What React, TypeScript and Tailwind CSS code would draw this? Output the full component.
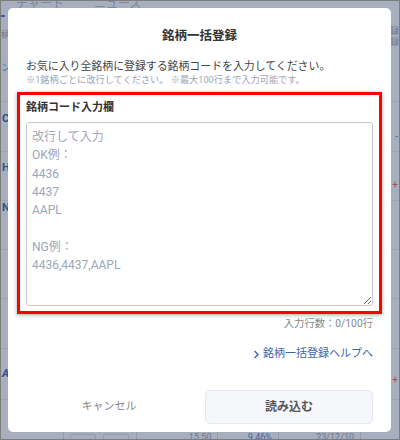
import React from 'react';

const FONT = { fontFamily: 'Roboto, "Noto Sans CJK JP", sans-serif' };

const ROW_LINES = [100, 150, 199, 248, 297, 347, 398];

const PLACEHOLDER = '改行して入力\nOK例：\n4436\n4437\nAAPL\n\nNG例：\n4436,4437,AAPL';

function BackdropPage() {
  return (
    <div className="absolute inset-0 bg-[#a7afbe]">
      {/* tab labels peeking above the dialog */}
      <div className="flex gap-[30px] pl-[15px] -mt-[6px] text-[12px] text-[#7b86a0]">
        <span>チャート</span>
        <span>ニュース</span>
      </div>
      <div className="absolute left-0 top-[14px] w-[4px] h-[2px] bg-[#3f63a8]" />
      <div className="absolute left-0 top-[30px] text-[9px] leading-none text-[#6b7690]">柄</div>
      <div className="absolute left-0 top-[62px] text-[10px] leading-none text-[#5270a8]">ン&gt;</div>
      <div className="absolute left-[1px] top-[112px] text-[11px] font-bold leading-none text-[#2d4f93]">C</div>
      <div className="absolute left-[1px] top-[161px] text-[11px] font-bold leading-none text-[#2d4f93]">H</div>
      <div className="absolute left-[1px] top-[201px] text-[11px] font-bold leading-none text-[#2d4f93]">N</div>
      <div className="absolute left-[1px] top-[367px] text-[11px] font-bold italic leading-none text-[#2d4f93]">A</div>
      <div className="absolute right-0 top-[25px] flex flex-col text-[9px] leading-[11px] text-[#6b7690]">
        <span>録</span>
        <span>録</span>
      </div>
      <div className="absolute right-[1px] top-[131px] text-[10px] leading-none text-[#3f63a8]">-</div>
      <div className="absolute right-[1px] top-[179px] text-[10px] leading-none text-[#b34a5a]">+</div>
      <div className="absolute right-[1px] top-[374px] text-[10px] leading-none text-[#b34a5a]">+</div>
      {ROW_LINES.map((y) => (
        <div key={y} className="absolute inset-x-0 h-px bg-[#9aa3b4]" style={{ top: y }} />
      ))}
      {/* table row peeking below the dialog */}
      <div className="absolute left-[62px] right-[38px] top-[430px] h-[12px] flex text-[9px] text-[#6b7690] border-l border-[#949dae]">
        <div className="w-[74px] flex gap-[7px] pl-[6px] pt-[3px] border-r border-[#949dae]">
          <div className="w-[26px] h-[10px] rounded-[2px] border border-[#949dae]" />
          <div className="w-[26px] h-[10px] rounded-[2px] border border-[#949dae]" />
        </div>
        <div className="w-[82px] text-right pr-[6px] border-r border-[#949dae]">15.50</div>
        <div className="w-[61px] text-right pr-[6px] text-[#3f63a8] border-r border-[#949dae]">9.46%</div>
        <div className="w-[83px] text-right pr-[6px] border-r border-[#949dae]">23/12/10</div>
      </div>
    </div>
  );
}

export default function App() {
  return (
    <div className="relative w-[400px] h-[440px] overflow-hidden border border-[#7d7d7d]" style={FONT}>
      <BackdropPage />

      <div className="absolute left-[7px] top-[7px] w-[383px] h-[424px] bg-white rounded-[5px] px-[18px] pt-[18px] flex flex-col">
        <h2 className="text-center text-[12.5px] font-bold leading-[20px] text-[#333]">銘柄一括登録</h2>

        <p className="mt-[14px] text-[10.9px] leading-[13px] text-[#444] whitespace-nowrap">
          お気に入り全銘柄に登録する銘柄コードを入力してください。
        </p>
        <p className="text-[9.2px] leading-[13px] text-[#9aa3b5] whitespace-nowrap">
          ※1銘柄ごとに改行してください。 ※最大100行まで入力可能です。
        </p>

        {/* highlighted input block */}
        <div className="mt-[6px] -mx-[9px] border-[3px] border-[#ff0000] shadow-[0_1px_4px_rgba(0,0,0,0.35)] px-[6px] pt-[6px] pb-[5px]">
          <label className="block text-[11px] font-bold leading-[14px] text-[#333]">銘柄コード入力欄</label>
          <textarea
            className="mt-[7px] block w-full h-[184px] rounded-[3px] border border-[#c3cad8] px-[5px] pt-[5px] text-[12px] leading-[18.3px] text-[#333] placeholder:text-[#9ba6ba] outline-none"
            placeholder={PLACEHOLDER}
          />
        </div>

        <div className="mt-[3px] text-right text-[10.3px] leading-[14px] text-[#888]">入力行数：0/100行</div>

        <a className="mt-[15px] self-end flex items-center gap-[3px] text-[11px] leading-[16px] text-[#3c64ad]">
          <svg width="7" height="9" viewBox="0 0 7 9" fill="none">
            <path d="M1.5 1 L5 4.5 L1.5 8" stroke="#3c64ad" strokeWidth="1.4" />
          </svg>
          銘柄一括登録ヘルプへ
        </a>

        <div className="mt-[28px] flex gap-[13px]">
          <button className="flex-1 h-[34px] text-[11px] text-[#888]">キャンセル</button>
          <button className="flex-1 h-[34px] rounded-[5px] bg-[#f5f7fa] border border-[#e4e8ef] text-[12px] font-bold text-[#555]">
            読み込む
          </button>
        </div>
      </div>
    </div>
  );
}
